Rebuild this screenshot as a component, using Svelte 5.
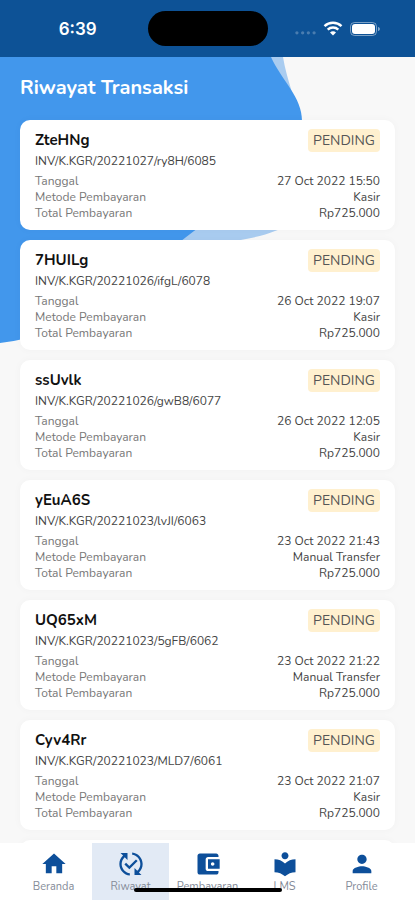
<script>
  const transactions = [
    { code: "ZteHNg", invoice: "INV/K.KGR/20221027/ry8H/6085", date: "27 Oct 2022 15:50", method: "Kasir" },
    { code: "7HUILg", invoice: "INV/K.KGR/20221026/ifgL/6078", date: "26 Oct 2022 19:07", method: "Kasir" },
    { code: "ssUvlk", invoice: "INV/K.KGR/20221026/gwB8/6077", date: "26 Oct 2022 12:05", method: "Kasir" },
    { code: "yEuA6S", invoice: "INV/K.KGR/20221023/lvJI/6063", date: "23 Oct 2022 21:43", method: "Manual Transfer" },
    { code: "UQ65xM", invoice: "INV/K.KGR/20221023/5gFB/6062", date: "23 Oct 2022 21:22", method: "Manual Transfer" },
    { code: "Cyv4Rr", invoice: "INV/K.KGR/20221023/MLD7/6061", date: "23 Oct 2022 21:07", method: "Kasir" },
  ];

  const tabs = [
    { label: "Beranda", icon: "M10 20v-6h4v6h5v-8h3L12 3 2 12h3v8z" },
    {
      label: "Riwayat",
      icon: "M17.66 9.53l-7.07 7.07-4.24-4.24 1.41-1.41 2.83 2.83 5.66-5.66 1.41 1.41zM4 12c0-2.33 1.02-4.42 2.62-5.88L9 8.5v-6H3l2.2 2.2C3.24 6.52 2 9.11 2 12c0 5.19 3.95 9.45 9 9.95v-2.02c-3.94-.49-7-3.86-7-7.93zm18 0c0-5.19-3.95-9.45-9-9.95v2.02c3.94.49 7 3.86 7 7.93 0 2.33-1.02 4.42-2.62 5.88L15 15.5v6h6l-2.2-2.2c1.96-1.82 3.2-4.41 3.2-7.3z",
    },
    {
      label: "Pembayaran",
      icon: "M21 18v1c0 1.1-.9 2-2 2H5c-1.11 0-2-.9-2-2V5c0-1.1.89-2 2-2h14c1.1 0 2 .9 2 2v1h-9c-1.11 0-2 .9-2 2v8c0 1.1.89 2 2 2h9zm-9-2h10V8H12v8zm4-2.5c-.83 0-1.5-.67-1.5-1.5s.67-1.5 1.5-1.5 1.5.67 1.5 1.5-.67 1.5-1.5 1.5z",
    },
    {
      label: "LMS",
      icon: "M12 11.55C9.64 9.35 6.48 8 3 8v11c3.48 0 6.64 1.35 9 3.55 2.36-2.19 5.52-3.55 9-3.55V8c-3.48 0-6.64 1.35-9 3.55zM12 8c1.66 0 3-1.34 3-3s-1.34-3-3-3-3 1.34-3 3 1.34 3 3 3z",
    },
    {
      label: "Profile",
      icon: "M12 12c2.21 0 4-1.79 4-4s-1.79-4-4-4-4 1.79-4 4 1.79 4 4 4zm0 2c-2.67 0-8 1.34-8 4v2h16v-2c0-2.66-5.33-4-8-4z",
    },
  ];

  let active = $state("Riwayat");
</script>

<div class="app">
  <header class="status-bar">
    <span class="time">6:39</span>
    <span class="island"></span>
    <div class="status-icons">
      <svg class="signal" viewBox="0 0 22 14" aria-hidden="true">
        <circle cx="2" cy="11" r="1.7" />
        <circle cx="8" cy="11" r="1.7" />
        <circle cx="14" cy="11" r="1.7" />
        <circle cx="20" cy="11" r="1.7" />
      </svg>
      <svg class="wifi" viewBox="0 0 20 15" aria-hidden="true">
        <path d="M1.5 5.2a12.3 12.3 0 0 1 17 0M4.7 8.6a7.6 7.6 0 0 1 10.6 0" />
        <path class="fill" d="M10 14.5l-3-3.1a4.2 4.2 0 0 1 6 0z" />
      </svg>
      <svg class="battery" viewBox="0 0 31 14" aria-hidden="true">
        <rect class="outline" x=".5" y=".5" width="26" height="13" rx="4" />
        <rect x="2" y="2" width="23" height="10" rx="3" />
        <path class="cap" d="M28 5c2.5 .5 2.5 3.5 0 4z" />
      </svg>
    </div>
  </header>

  <main>
    <svg class="blob" viewBox="0 0 320 290" aria-hidden="true">
      <path class="light" d="M0 0H283C285 12 288 22 291 32C309 110 310 163 275 174C255 182 225 187 180 187H0z" />
      <path class="dark" d="M0 0H271C282 24 302 40 302 64C302 125 225 150 194 174C130 222 90 275 0 286z" />
    </svg>

    <h1>Riwayat Transaksi</h1>

    <div class="list">
      {#each transactions as trx}
        <article class="card">
          <div class="card-head">
            <h2>{trx.code}</h2>
            <span class="badge">PENDING</span>
          </div>
          <p class="invoice">{trx.invoice}</p>
          <dl>
            <div><dt>Tanggal</dt><dd>{trx.date}</dd></div>
            <div><dt>Metode Pembayaran</dt><dd>{trx.method}</dd></div>
            <div><dt>Total Pembayaran</dt><dd>Rp725.000</dd></div>
          </dl>
        </article>
      {/each}
      <article class="card"></article>
    </div>
  </main>

  <nav>
    {#each tabs as tab}
      <button class:active={active === tab.label} onclick={() => (active = tab.label)}>
        <svg viewBox="0 0 24 24" aria-hidden="true"><path d={tab.icon} /></svg>
        <span>{tab.label}</span>
      </button>
    {/each}
    <span class="home-indicator"></span>
  </nav>
</div>

<style>
  :global(body) {
    margin: 0;
    background: #f8f8f8;
  }

  .app {
    display: flex;
    flex-direction: column;
    height: 100vh;
    overflow: hidden;
    font-family: Nunito, "Noto Sans", sans-serif;
    color: #222;
  }

  .status-bar {
    display: grid;
    grid-template-columns: 1fr 120px 1fr;
    align-items: center;
    flex: none;
    height: 57px;
    background: #0d5296;
    color: #fff;
  }

  .time {
    padding-left: 8px;
    text-align: center;
    font: 600 17px Inter, sans-serif;
  }

  .island {
    height: 35px;
    border-radius: 18px;
    background: #000;
  }

  .status-icons {
    display: flex;
    align-items: center;
    justify-content: flex-end;
    gap: 7px;
    padding-right: 34px;
  }

  .status-icons svg {
    fill: #fff;
  }

  .signal {
    width: 21px;
    height: 14px;
    opacity: 0.25;
  }

  .wifi {
    width: 20px;
    height: 15px;
  }

  .wifi path {
    fill: none;
    stroke: #fff;
    stroke-width: 2.4;
  }

  .wifi .fill {
    fill: #fff;
    stroke: none;
  }

  .battery {
    width: 31px;
    height: 14px;
  }

  .battery .outline {
    fill: none;
    stroke: #fff;
    opacity: 0.45;
  }

  .battery .cap {
    opacity: 0.5;
  }

  main {
    position: relative;
    flex: 1;
    min-height: 0;
    overflow: hidden;
    padding: 0 20px;
  }

  .blob {
    position: absolute;
    top: 0;
    left: 0;
    width: 320px;
    height: 290px;
  }

  .blob .light {
    fill: #a9ccf0;
  }

  .blob .dark {
    fill: #4297ec;
  }

  h1 {
    position: relative;
    margin: 0;
    padding: 19px 0 20px;
    font-size: 20px;
    line-height: 24px;
    color: #fff;
  }

  .list {
    position: relative;
    display: flex;
    flex-direction: column;
    gap: 10px;
  }

  .card {
    box-sizing: border-box;
    min-height: 110px;
    padding: 9px 15px;
    border-radius: 10px;
    background: #fff;
    box-shadow: 0 0 8px rgba(0, 0, 0, 0.03);
  }

  .card-head {
    display: flex;
    justify-content: space-between;
    align-items: center;
  }

  h2 {
    margin: 0;
    font-size: 15px;
    line-height: 23px;
    color: #111;
  }

  .badge {
    padding: 0 5px;
    border-radius: 4px;
    background: #fff0cf;
    font-size: 14px;
    line-height: 23px;
    color: #555;
  }

  .invoice {
    margin: 0 0 3px;
    font-size: 12px;
    line-height: 18px;
    color: #444;
  }

  dl {
    margin: 0;
    font-size: 12px;
    line-height: 16px;
  }

  dl div {
    display: flex;
    justify-content: space-between;
  }

  dt {
    color: #777;
  }

  dd {
    margin: 0;
    color: #444;
  }

  nav {
    position: relative;
    display: grid;
    grid-template-columns: repeat(5, 1fr);
    flex: none;
    height: 57px;
    padding: 0 15px;
    background: #fff;
  }

  button {
    display: flex;
    flex-direction: column;
    align-items: center;
    padding: 7px 0 0;
    border: 0;
    background: none;
    font-family: inherit;
    font-size: 11px;
    line-height: 18px;
    color: #848b98;
    cursor: pointer;
  }

  button.active {
    background: #e2eaf5;
  }

  button svg {
    width: 28px;
    height: 28px;
    fill: #0d4f9a;
  }

  .home-indicator {
    position: absolute;
    bottom: 8px;
    left: 50%;
    width: 148px;
    height: 4px;
    border-radius: 2px;
    background: #000;
    transform: translateX(-50%);
  }
</style>
